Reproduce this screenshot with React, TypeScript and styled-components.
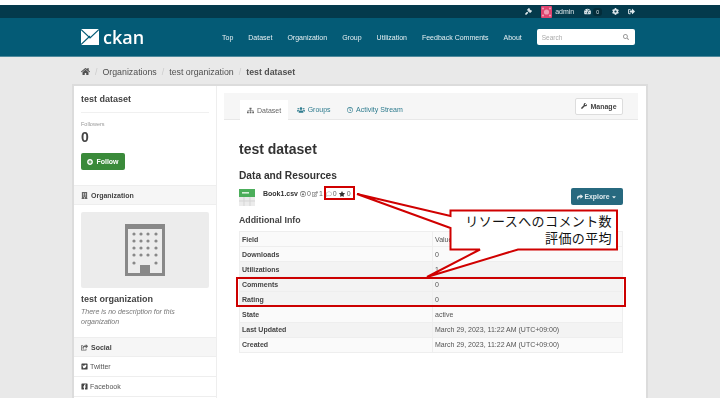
import React from "react";
import styled, { createGlobalStyle } from "styled-components";
import {
  FaBuilding,
  FaCaretDown,
  FaCog,
  FaFacebookSquare,
  FaHome,
  FaPlusCircle,
  FaRegClock,
  FaRegComment,
  FaRegEdit,
  FaRegArrowAltCircleDown,
  FaSearch,
  FaShare,
  FaShareSquare,
  FaSignOutAlt,
  FaSitemap,
  FaStar,
  FaTachometerAlt,
  FaTwitterSquare,
  FaUsers,
  FaWrench,
  FaGavel
} from "react-icons/fa";

const GlobalStyle = createGlobalStyle`
  html, body {
    margin: 0;
    padding: 0;
    width: 720px;
    height: 405px;
    overflow: hidden;
    background: #fff;
    font-family: "Liberation Sans", Arial, sans-serif;
  }
`;

const Page = styled.div`
  position: relative;
  width: 720px;
  height: 405px;
  padding-top: 5px;
  box-sizing: border-box;
  overflow: hidden;
`;

const Shot = styled.div`
  height: 393px;
  display: flex;
  flex-direction: column;
  background: #e9e9e9;
  overflow: hidden;
  filter: blur(0.35px);
`;

const AccountBar = styled.div`
  height: 13px;
  flex: none;
  background: #043a4c;
  display: flex;
  justify-content: flex-end;
  align-items: center;
  padding-right: 85px;
  color: #dfe8ec;
`;

const AccountItem = styled.span<{ $gap?: number }>`
  display: flex;
  align-items: center;
  margin-left: ${p => p.$gap ?? 0}px;
  font-size: 7px;
`;

const Avatar = styled.svg`
  width: 11px;
  height: 12px;
  margin-right: 3px;
`;

const Badge = styled.span`
  background: #032c3a;
  border-radius: 3px;
  padding: 1px 3px;
  margin-left: 2px;
  font-size: 5px;
`;

const Masthead = styled.header`
  height: 39px;
  flex: none;
  box-sizing: border-box;
  background: #045b76;
  border-bottom: 1px solid #4f8a9c;
  display: flex;
  align-items: center;
  padding-left: 81px;
`;

const Logo = styled.div`
  display: flex;
  align-items: center;
  width: 141px;
  color: #fff;
  font-family: "Open Sans", sans-serif;
  font-size: 18px;
  font-weight: 600;
`;

const LogoMark = styled.svg`
  width: 18px;
  height: 16px;
  margin-right: 4px;
`;

const Nav = styled.nav`
  display: flex;
  gap: 15px;
  color: #e8f0f3;
  font-size: 7px;
`;

const Search = styled.div`
  margin-left: 15px;
  width: 98px;
  height: 16px;
  box-sizing: border-box;
  padding: 0 6px 0 5px;
  background: #fff;
  border-radius: 2px;
  display: flex;
  align-items: center;
  justify-content: space-between;
  color: #aaa;
  font-size: 6.5px;
`;

const Toolbar = styled.div`
  height: 29px;
  flex: none;
  box-sizing: border-box;
  padding-left: 81px;
  display: flex;
  align-items: center;
  color: #505050;
  font-size: 8.8px;
`;

const Slash = styled.span`
  color: #ccc;
  margin: 0 5px;
`;

const Strong = styled.strong`
  font-weight: 700;
`;

const Wrapper = styled.div`
  flex: 1;
  margin-left: 74px;
  width: 572px;
  background: #fff;
  box-shadow: 0 0 0 2px #dcdcdc;
  display: flex;
  min-height: 0;
`;

const Sidebar = styled.aside`
  width: 143px;
  flex: none;
  box-sizing: border-box;
  border-right: 1px solid #eee;
  color: #444;
`;

const SideTop = styled.div`
  padding: 8px 7px 0;
  height: 99px;
  box-sizing: border-box;
`;

const SideTitle = styled.div`
  font-size: 9px;
  line-height: 10px;
  font-weight: 700;
  padding-bottom: 8px;
  border-bottom: 1px solid #f0f0f0;
  margin-bottom: 8px;
`;

const Muted = styled.div`
  font-size: 5.5px;
  line-height: 7px;
  color: #999;
`;

const BigNum = styled.div`
  font-size: 14px;
  font-weight: 700;
  line-height: 15px;
  margin: 2px 0 8px;
`;

const FollowButton = styled.div`
  width: 44px;
  height: 17px;
  box-sizing: border-box;
  background: #3a8a3a;
  border-radius: 2px;
  color: #fff;
  font-size: 7px;
  font-weight: 700;
  display: flex;
  align-items: center;
  justify-content: center;
  gap: 3px;
`;

const SideHeading = styled.div`
  height: 20px;
  box-sizing: border-box;
  padding-left: 7px;
  background: #f6f6f6;
  border-top: 1px solid #eee;
  border-bottom: 1px solid #eee;
  display: flex;
  align-items: center;
  gap: 3px;
  font-size: 7px;
  font-weight: 700;
`;

const OrgBlock = styled.div`
  padding: 7px 7px 10px;
`;

const OrgImage = styled.div`
  height: 76px;
  background: #ececec;
  border-radius: 2px;
  display: flex;
  align-items: center;
  justify-content: center;
`;

const OrgName = styled.div`
  font-size: 9px;
  font-weight: 700;
  margin-top: 6px;
  line-height: 11px;
`;

const OrgNote = styled.div`
  width: 110px;
  font-size: 7px;
  font-style: italic;
  color: #777;
  line-height: 10px;
  margin-top: 2px;
`;

const SocialRow = styled.div`
  height: 20px;
  box-sizing: border-box;
  padding-left: 7px;
  border-bottom: 1px solid #eee;
  display: flex;
  align-items: center;
  gap: 2px;
  font-size: 7px;
  color: #555;
`;

const Main = styled.main`
  flex: 1;
  min-width: 0;
  padding: 7px 8px 0 7px;
  color: #444;
`;

const Tabs = styled.div`
  height: 27px;
  box-sizing: border-box;
  background: #f6f6f6;
  border-bottom: 1px solid #e8e8e8;
  padding-left: 16px;
  display: flex;
  align-items: flex-end;
  gap: 0.5px;
`;

const Tab = styled.div<{ $active?: boolean }>`
  height: ${p => (p.$active ? 20 : 19)}px;
  box-sizing: border-box;
  margin-bottom: ${p => (p.$active ? -1 : 0)}px;
  padding: 0 ${p => (p.$active ? 7 : 8)}px;
  background: ${p => (p.$active ? "#fff" : "transparent")};
  color: ${p => (p.$active ? "#666" : "#2f7c8f")};
  display: flex;
  align-items: center;
  gap: 3px;
  font-size: 7px;
`;

const ManageButton = styled.div`
  margin-left: auto;
  margin-right: 15px;
  align-self: center;
  width: 48px;
  height: 17px;
  box-sizing: border-box;
  background: #fff;
  border: 1px solid #ddd;
  border-radius: 2px;
  display: flex;
  align-items: center;
  justify-content: center;
  gap: 3px;
  font-size: 7px;
  font-weight: 700;
  color: #444;
`;

const Content = styled.div`
  padding: 21px 15px 0;
`;

const Title = styled.h1`
  margin: 0;
  font-size: 14px;
  line-height: 16px;
  font-weight: 700;
  color: #333;
`;

const Heading = styled.h2`
  margin: 13px 0 0;
  font-size: 10.2px;
  line-height: 12px;
  font-weight: 700;
  color: #333;
`;

const ResourceRow = styled.div`
  height: 31px;
  margin-top: 2px;
  display: flex;
  align-items: flex-start;
`;

const FileIcon = styled.svg`
  width: 16px;
  height: 17px;
  margin-right: 8px;
  margin-top: 5px;
`;

const ResourceMeta = styled.div`
  display: flex;
  align-items: center;
  margin-top: 6px;
  font-size: 7px;
  color: #666;
`;

const ResourceName = styled.span`
  font-weight: 700;
  color: #333;
`;

const Stat = styled.span<{ $left: number; $gap?: number }>`
  display: inline-flex;
  align-items: center;
  gap: ${p => p.$gap ?? 1}px;
  margin-left: ${p => p.$left}px;
`;

const ExploreButton = styled.div`
  margin-left: auto;
  width: 52px;
  height: 17px;
  margin-top: 4px;
  background: #27697f;
  border-radius: 2px;
  color: #dfeaee;
  font-size: 6.8px;
  font-weight: 700;
  display: flex;
  align-items: center;
  justify-content: center;
  gap: 2px;
`;

const SubHeading = styled.h3`
  margin: 0 0 5px;
  font-size: 8.8px;
  line-height: 11px;
  font-weight: 700;
  color: #444;
`;

const Table = styled.table`
  width: 384px;
  border-collapse: collapse;
  table-layout: fixed;
  font-size: 7px;
  color: #555;
  border: 1px solid #eee;
`;

const Row = styled.tr<{ $shade?: boolean }>`
  height: 15.1px;
  background: ${p => (p.$shade ? "#f3f3f3" : "#fafafa")};
`;

const FieldCell = styled.td`
  width: 193px;
  box-sizing: border-box;
  padding: 0 2px;
  border: 1px solid #eee;
  font-weight: 700;
  color: #444;
`;

const ValueCell = styled.td`
  padding: 0 2px;
  border: 1px solid #eee;
`;

const Overlay = styled.svg`
  position: absolute;
  left: 0;
  top: 0;
  width: 720px;
  height: 405px;
  pointer-events: none;
`;

const Callout = styled.div`
  position: absolute;
  left: 452px;
  top: 212px;
  width: 160px;
  text-align: right;
  font-family: "Noto Sans CJK JP", sans-serif;
  font-size: 13px;
  line-height: 17px;
  letter-spacing: 0.4px;
  color: #111;
`;

const rows = [
  { field: "Field", value: "Value" },
  { field: "Downloads", value: "0" },
  { field: "Utilizations", value: "1", shade: true },
  { field: "Comments", value: "0", shade: true },
  { field: "Rating", value: "0", shade: true },
  { field: "State", value: "active" },
  { field: "Last Updated", value: "March 29, 2023, 11:22 AM (UTC+09:00)", shade: true },
  { field: "Created", value: "March 29, 2023, 11:22 AM (UTC+09:00)" }
];

export default function App() {
  return (
    <Page>
      <GlobalStyle />
      <Shot>
        <AccountBar>
          <AccountItem><FaGavel size={7} /></AccountItem>
          <AccountItem $gap={9}>
            <Avatar viewBox="0 0 11 12">
              <rect width="11" height="12" rx="1" fill="#e0446f" />
              <circle cx="5.5" cy="6" r="2.6" fill="#f09ab2" />
              <circle cx="2" cy="2.5" r="1.1" fill="#f09ab2" />
              <circle cx="9" cy="2.5" r="1.1" fill="#f09ab2" />
              <circle cx="2" cy="9.5" r="1.1" fill="#f09ab2" />
              <circle cx="9" cy="9.5" r="1.1" fill="#f09ab2" />
            </Avatar>
            admin
          </AccountItem>
          <AccountItem $gap={10}><FaTachometerAlt size={7} /><Badge>0</Badge></AccountItem>
          <AccountItem $gap={10}><FaCog size={7} /></AccountItem>
          <AccountItem $gap={9}><FaSignOutAlt size={7} /></AccountItem>
        </AccountBar>
        <Masthead>
          <Logo>
            <LogoMark viewBox="0 0 18 16">
              <rect width="18" height="16" fill="#fff" />
              <path d="M0 .5L9 9 18 .5M0 15.5L9 7" fill="none" stroke="#045b76" strokeWidth="1.1" />
            </LogoMark>
            ckan
          </Logo>
          <Nav>
            <span>Top</span>
            <span>Dataset</span>
            <span>Organization</span>
            <span>Group</span>
            <span>Utilization</span>
            <span>Feedback Comments</span>
            <span>About</span>
          </Nav>
          <Search>
            Search
            <FaSearch size={6} color="#999" />
          </Search>
        </Masthead>
        <Toolbar>
          <FaHome size={9} />
          <Slash>/</Slash>
          Organizations
          <Slash>/</Slash>
          test organization
          <Slash>/</Slash>
          <Strong>test dataset</Strong>
        </Toolbar>
        <Wrapper>
          <Sidebar>
            <SideTop>
              <SideTitle>test dataset</SideTitle>
              <Muted>Followers</Muted>
              <BigNum>0</BigNum>
              <FollowButton><FaPlusCircle size={6} />Follow</FollowButton>
            </SideTop>
            <SideHeading><FaBuilding size={7} color="#666" />Organization</SideHeading>
            <OrgBlock>
              <OrgImage>
                <svg width="40" height="52" viewBox="0 0 40 52">
                  <path fillRule="evenodd" fill="#888" d="M0 0h40v52H0zM3 5v44h34V5z" />
                  <rect x="15" y="41" width="10" height="11" fill="#888" />
                  {[10, 17, 24, 31, 39].map(y =>
                    [9, 16, 23, 31].map(x =>
                      y === 39 && (x === 16 || x === 23) ? null : (
                        <circle key={`${x}-${y}`} cx={x} cy={y} r="1.6" fill="#888" />
                      )
                    )
                  )}
                </svg>
              </OrgImage>
              <OrgName>test organization</OrgName>
              <OrgNote>There is no description for this organization</OrgNote>
            </OrgBlock>
            <SideHeading><FaShareSquare size={7} color="#666" />Social</SideHeading>
            <SocialRow><FaTwitterSquare size={7} color="#444" />Twitter</SocialRow>
            <SocialRow><FaFacebookSquare size={7} color="#444" />Facebook</SocialRow>
          </Sidebar>
          <Main>
            <Tabs>
              <Tab $active><FaSitemap size={7} />Dataset</Tab>
              <Tab><FaUsers size={8} />Groups</Tab>
              <Tab><FaRegClock size={6} />Activity Stream</Tab>
              <ManageButton><FaWrench size={6} />Manage</ManageButton>
            </Tabs>
            <Content>
              <Title>test dataset</Title>
              <Heading>Data and Resources</Heading>
              <ResourceRow>
                <FileIcon viewBox="0 0 16 17">
                  <rect width="16" height="17" fill="#ececec" />
                  <rect width="16" height="8" fill="#4cae5b" />
                  <path d="M0 12h16M5 8v9M11 8v9" stroke="#d5d5d5" strokeWidth="1" />
                  <rect x="3" y="3" width="7" height="1.6" fill="#d6f0da" />
                </FileIcon>
                <ResourceMeta>
                  <ResourceName>Book1.csv</ResourceName>
                  <Stat $left={2}><FaRegArrowAltCircleDown size={6} />0</Stat>
                  <Stat $left={1}><FaRegEdit size={6} />1</Stat>
                  <Stat $left={3}><FaRegComment size={6} color="#aaa" />0</Stat>
                  <Stat $left={2} $gap={2}><FaStar size={6} color="#333" />0</Stat>
                </ResourceMeta>
                <ExploreButton><FaShare size={6} />Explore<FaCaretDown size={6} /></ExploreButton>
              </ResourceRow>
              <SubHeading>Additional Info</SubHeading>
              <Table>
                <tbody>
                  {rows.map(r => (
                    <Row key={r.field} $shade={r.shade}>
                      <FieldCell>{r.field}</FieldCell>
                      <ValueCell>{r.value}</ValueCell>
                    </Row>
                  ))}
                </tbody>
              </Table>
            </Content>
          </Main>
        </Wrapper>
      </Shot>
      <Overlay viewBox="0 0 720 405">
        <rect x="325" y="187" width="29" height="12" fill="none" stroke="#d00000" strokeWidth="2" />
        <rect x="237" y="278" width="388" height="28" fill="none" stroke="#cc0000" strokeWidth="2" />
        <path
          d="M450.5 210.5H617V249.5H518L427 277 480 249.5H450.5V228L357 194 450.5 216z"
          fill="#fff"
          stroke="#d00000"
          strokeWidth="2"
        />
      </Overlay>
      <Callout>
        リソースへのコメント数
        <br />
        評価の平均
      </Callout>
    </Page>
  );
}
